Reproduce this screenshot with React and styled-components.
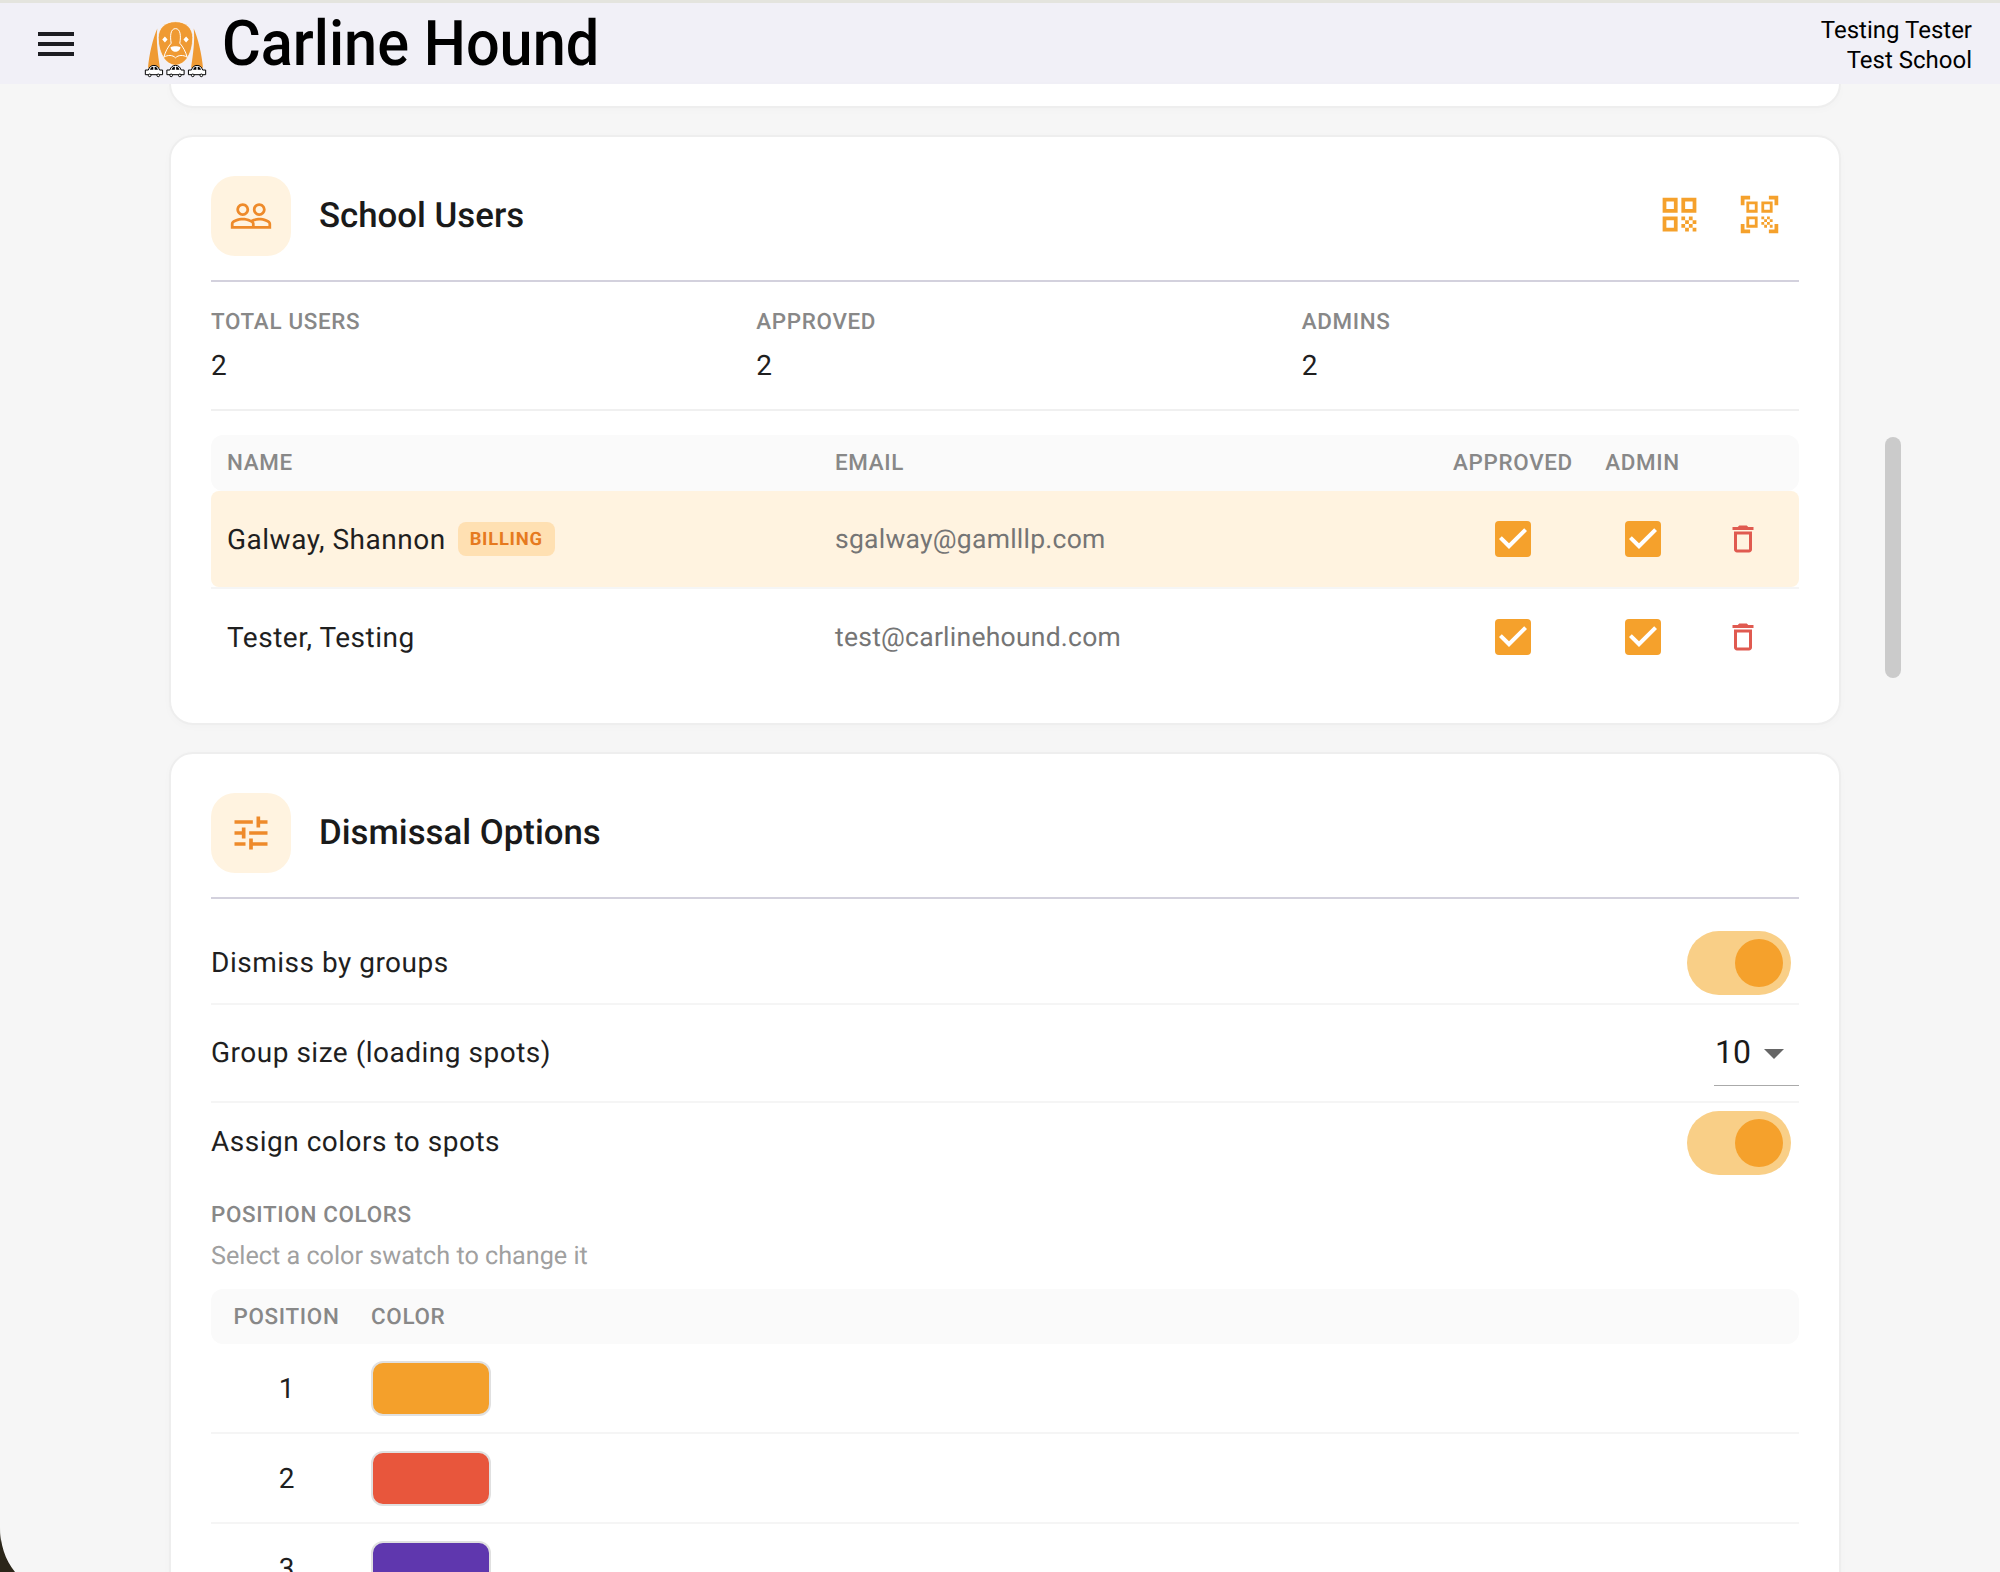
import React from 'react'
import styled, { createGlobalStyle } from 'styled-components'

const GlobalStyle = createGlobalStyle`
  html, body {
    margin: 0;
    padding: 0;
    background: #f6f6f6;
  }
  * {
    box-sizing: border-box;
  }
`
const Screen = styled.div`
  position: relative;
  width: 2000px;
  height: 1572px;
  overflow: hidden;
  background-color: #f6f6f6;
  font-family: Roboto, sans-serif;
  text-rendering: geometricPrecision;
  color: #1f1f1f;
  border-top: 3px solid #e4e4de;
`
const TopBar = styled.header`
  height: 81px;
  display: flex;
  align-items: center;
  background-color: #f1f0f7;
  color: #000;
  padding: 0 28px 0 32px;
`
const MenuButton = styled.div`
  width: 48px;
  height: 48px;
  color: #1d1d22;
  > svg { display: block; }
`
const Logo = styled.svg`
  width: 63px;
  height: 57px;
  margin: 12px 0 0 64px;
  flex-shrink: 0;
`
const Brand = styled.div`
  font-size: 63px;
  font-weight: 500;
  margin: 2px 0 0 15px;
  white-space: nowrap;
  transform: scaleX(0.943);
  transform-origin: left center;
  flex: 1;
`
const UserBox = styled.div`
  text-align: right;
  font-size: 24px;
  line-height: 30px;
  padding-top: 2px;
`
const Main = styled.main`
  display: flex;
  flex-direction: column;
  gap: 27px;
  padding-left: 169px;
  width: 1841px;
`
const Card = styled.section`
  background-color: #fff;
  border: 2px solid #eeeeee;
  border-radius: 24px;
  padding: 0 40px 36px;
  box-shadow: 0 2px 8px rgba(0, 0, 0, 0.02);
`
const StubCard = styled(Card)`
  height: 24px;
  padding: 0;
  border-top: none;
  border-radius: 0 0 24px 24px;
`
const CardHead = styled.div`
  display: flex;
  align-items: center;
  height: 145px;
  padding-top: 39px;
  padding-bottom: 24px;
  border-bottom: 2px solid #d3d1dd;
`
const IconBox = styled.div`
  width: 80px;
  height: 80px;
  border-radius: 24px;
  background-color: #fff3e0;
  color: #ee8a2a;
  display: flex;
  align-items: center;
  justify-content: center;
`
const CardTitle = styled.h2`
  margin: 0 0 0 28px;
  font-size: 34.8px;
  font-weight: 500;
  color: #1a1a1a;
  flex: 1;
`
const HeadActions = styled.div`
  display: flex;
  align-items: center;
  gap: 35px;
  padding-right: 17px;
  margin-bottom: 3px;
  color: #f5a12c;
  > svg { display: block; }
`
const Stats = styled.div`
  display: grid;
  grid-template-columns: repeat(3, 1fr);
  gap: 48px;
  padding: 26px 0 0;
  height: 129px;
  border-bottom: 2px solid #f0f0f0;
`
const Label = styled.div`
  font-size: 22.4px;
  line-height: 28px;
  font-weight: 500;
  letter-spacing: 0.03em;
  color: #888;
  text-transform: uppercase;
`
const StatValue = styled.div`
  font-size: 28px;
  line-height: 36px;
  margin-top: 12px;
  letter-spacing: 0.00938em;
`
const UserHead = styled.div`
  display: grid;
  grid-template-columns: 608px 618px 152px 107px 103px;
  align-items: center;
  height: 56px;
  margin-top: 24px;
  background-color: #fafafa;
  border-radius: 12px;
`
const HeadCell = styled(Label)`
  padding-left: ${(p) => (p.$center ? 0 : '16px')};
  text-align: ${(p) => (p.$center ? 'center' : 'left')};
`
const UserRow = styled.div`
  display: grid;
  grid-template-columns: 608px 618px 152px 107px 103px;
  align-items: center;
  height: 96px;
  background-color: ${(p) => (p.$billing ? '#fff3e0' : 'transparent')};
  border-radius: 8px;
  margin-bottom: 2px;
  position: relative;
`
const RowRule = styled.div`
  height: 2px;
  margin-top: -2px;
  background-color: #f5f5f5;
`
const NameCell = styled.div`
  display: flex;
  align-items: center;
  gap: 12px;
  padding-left: 16px;
  font-size: 28px;
  letter-spacing: 0.018em;
`
const Badge = styled.span`
  height: 34px;
  display: inline-flex;
  align-items: center;
  padding: 0 12px;
  border-radius: 8px;
  background-color: #ffe0b2;
  color: #e67a1e;
  font-size: 18.4px;
  font-weight: 700;
  letter-spacing: 0.04em;
`
const EmailCell = styled.div`
  padding-left: 16px;
  font-size: 26.5px;
  letter-spacing: 0.00938em;
  color: #757575;
`
const IconCell = styled.div`
  display: flex;
  justify-content: center;
  padding-right: ${(p) => p.$shift || 0};
  > svg { display: block; }
`
const OptionRow = styled.div`
  display: flex;
  align-items: center;
  justify-content: space-between;
  height: ${(p) => p.$height};
  margin-top: ${(p) => p.$top || 0};
  border-bottom: ${(p) => (p.$last ? 'none' : '2px solid #f5f5f5')};
  font-size: 28px;
  letter-spacing: 0.018em;
`
const OptionLabel = styled.span`
  margin-bottom: 2px;
`
const Toggle = styled.div`
  width: 104px;
  height: 64px;
  border-radius: 32px;
  background-color: #f9cf87;
  margin-right: 8px;
  display: flex;
  align-items: center;
  justify-content: flex-end;
  padding-right: 8px;
`
const Knob = styled.div`
  width: 48px;
  height: 48px;
  border-radius: 50%;
  background-color: #f5a12c;
`
const SelectBox = styled.div`
  width: 85px;
  height: 67px;
  align-self: flex-start;
  margin-top: 14px;
  border-bottom: 1px solid #aaa;
  display: flex;
  align-items: center;
  font-size: 32px;
  letter-spacing: 0;
  padding-left: 1px;
  color: #1a1a1a;
`
const Caret = styled.span`
  width: 0;
  height: 0;
  margin-left: 13px;
  margin-top: 4px;
  border-left: 10px solid transparent;
  border-right: 10px solid transparent;
  border-top: 10px solid #666;
`
const ColorsLabel = styled(Label)`
  margin-top: 19px;
`
const Hint = styled.div`
  font-size: 25.2px;
  line-height: 30px;
  margin-top: 13px;
  color: #a0a0a0;
`
const ColorHead = styled.div`
  display: grid;
  grid-template-columns: 151px 1fr;
  align-items: center;
  height: 55px;
  margin-top: 17px;
  background-color: #fafafa;
  border-radius: 12px;
`
const ColorHeadCell = styled(Label)`
  text-align: ${(p) => (p.$center ? 'center' : 'left')};
  padding-left: ${(p) => (p.$center ? 0 : '9px')};
`
const ColorRow = styled.div`
  display: grid;
  grid-template-columns: 151px 1fr;
  align-items: center;
  height: 90px;
  border-bottom: 2px solid #f5f5f5;
`
const Position = styled.div`
  text-align: center;
  font-size: 28px;
`
const Swatch = styled.div`
  width: 120px;
  height: 55px;
  margin-left: 9px;
  border: 2px solid #e0e0e0;
  border-radius: 12px;
  background-color: ${(p) => p.$color};
`
const Scrollbar = styled.div`
  position: absolute;
  left: 1885px;
  top: 434px;
  width: 16px;
  height: 241px;
  border-radius: 8px;
  background-color: #cbcbcb;
`
/* the dark desktop peeking through the window's rounded corner */
const WindowCorner = styled.div`
  position: absolute;
  left: 0;
  bottom: 0;
  width: 15px;
  height: 46px;
  background: linear-gradient(rgba(43, 38, 25, 0), #2b2619 35%);
  clip-path: path('M0 0 C0 18 5 34 15 46 H0 Z');
`

const Icon = ({ size = 24, d, fill = 'currentColor' }) => (
  <svg width={size} height={size} viewBox="0 0 24 24" fill={fill}>
    <path d={d} />
  </svg>
)

const CheckIcon = () => (
  <svg width="48" height="48" viewBox="0 0 24 24">
    <rect x="3" y="3" width="18" height="18" rx="2" fill="#f5a12c" />
    <path d="M10 17l-5-5 1.41-1.41L10 14.17l7.59-7.59L19 8z" fill="#fff" />
  </svg>
)

const MENU = 'M3 18h18v-2H3zm0-5h18v-2H3zm0-7v2h18V6z'
const PEOPLE = 'M16.5 13c-1.2 0-3.07.34-4.5 1-1.43-.67-3.3-1-4.5-1C5.33 13 1 14.08 1 16.25V19h22v-2.75c0-2.17-4.33-3.25-6.5-3.25zm-4 4.5h-10v-1.25c0-.54 2.56-1.75 5-1.75s5 1.21 5 1.75v1.25zm9 0H14v-1.25c0-.46-.2-.86-.52-1.22.88-.3 1.96-.53 3.02-.53 2.44 0 5 1.21 5 1.75v1.25zM7.5 12c1.93 0 3.5-1.57 3.5-3.5S9.43 5 7.5 5 4 6.57 4 8.5 5.57 12 7.5 12zm0-5.5c1.1 0 2 .9 2 2s-.9 2-2 2-2-.9-2-2 .9-2 2-2zm9 5.5c1.93 0 3.5-1.57 3.5-3.5S18.43 5 16.5 5 13 6.57 13 8.5s1.57 3.5 3.5 3.5zm0-5.5c1.1 0 2 .9 2 2s-.9 2-2 2-2-.9-2-2 .9-2 2-2z'
const TUNE = 'M3 17v2h6v-2H3zM3 5v2h10V5H3zm10 16v-2h8v-2h-8v-2h-2v6h2zM7 9v2H3v2h4v2h2V9H7zm14 4v-2H11v2h10zm-6-4h2V7h4V5h-4V3h-2v6z'
const QR = 'M3 11h8V3H3v8zm2-6h4v4H5V5zM3 21h8v-8H3v8zm2-6h4v4H5v-4zM13 3v8h8V3h-8zm6 6h-4V5h4v4zM19 19h2v2h-2zM13 13h2v2h-2zM15 15h2v2h-2zM13 17h2v2h-2zM15 19h2v2h-2zM17 17h2v2h-2zM17 13h2v2h-2zM19 15h2v2h-2z'
const QR_SCAN = 'M9.5 6.5v3h-3v-3h3M11 5H5v6h6V5zm-1.5 9.5v3h-3v-3h3M11 13H5v6h6v-6zm6.5-6.5v3h-3v-3h3M19 5h-6v6h6V5zm-6 8h1.5v1.5H13V13zm1.5 1.5H16V16h-1.5v-1.5zM16 13h1.5v1.5H16V13zm-3 3h1.5v1.5H13V16zm1.5 1.5H16V19h-1.5v-1.5zM16 16h1.5v1.5H16V16zm1.5-1.5H19V16h-1.5v-1.5zm0 3H19V19h-1.5v-1.5zM22 7h-2V4h-3V2h5v5zm0 15v-5h-2v3h-3v2h5zM2 22h5v-2H4v-3H2v5zM2 2v5h2V4h3V2H2z'
const TRASH = 'M6 19c0 1.1.9 2 2 2h8c1.1 0 2-.9 2-2V7H6v12zM8 9h8v10H8V9zm7.5-5l-1-1h-5l-1 1H5v2h14V4h-3.5z'

const users = [
  { name: 'Galway, Shannon', email: 'sgalway@gamlllp.com', billing: true },
  { name: 'Tester, Testing', email: 'test@carlinehound.com' },
]
const colors = ['#f4a02b', '#e8563c', '#5f37ae']

const Car = ({ x }) => (
  <g transform={`translate(${x} 0)`}>
    <path d="M-26 207v-14h9c3-9 8-14 17-14s14 5 17 14h9v14z" fill="#fff" stroke="#000" strokeWidth="3" />
    <path d="M-12 192c2-5 5-9 10-9v9zM2 183c5 0 8 4 10 9H2z" fill="#000" />
    <circle cx="-13" cy="209" r="4" fill="#fff" stroke="#000" strokeWidth="3" />
    <circle cx="13" cy="209" r="4" fill="#fff" stroke="#000" strokeWidth="3" />
  </g>
)

const HoundLogo = () => (
  <Logo viewBox="40 45 190 172">
    <path d="M80 68C66 100 56 145 52 186h36c-6-40-12-80-8-118zM190 68c14 32 24 77 28 118h-36c6-40 12-80 8-118z" fill="#ef9a33" />
    <path d="M135 47c-32 0-52 20-52 48 0 26 6 46 18 64 7 10 18 18 34 20 16-2 27-10 34-20 12-18 18-38 18-64 0-28-20-48-52-48z" fill="#ef9a33" stroke="#fff" strokeWidth="2" />
    <path d="M122 112C118 90 120 68 135 68s17 22 13 44c9 10 18 26 22 42-12-7-26-7-35 2-9-9-23-9-35-2 4-16 13-32 22-42z" fill="none" stroke="#fff" strokeWidth="3" />
    <path d="M103 92l8 9-8 9-8-9zM167 92l8 9-8 9-8-9zM120 124c8-4 22-4 30 0 0 7-8 14-15 14s-15-7-15-14z" fill="#fff" />
    <Car x={70} />
    <Car x={135} />
    <Car x={200} />
  </Logo>
)

function App() {
  return (
    <Screen>
      <GlobalStyle />
      <TopBar>
        <MenuButton><Icon size={48} d={MENU} /></MenuButton>
        <HoundLogo />
        <Brand>Carline Hound</Brand>
        <UserBox>
          <div>Testing Tester</div>
          <div>Test School</div>
        </UserBox>
      </TopBar>
      <Main>
        <StubCard />
        <Card>
          <CardHead>
            <IconBox><Icon size={44} d={PEOPLE} /></IconBox>
            <CardTitle>School Users</CardTitle>
            <HeadActions>
              <Icon size={45} d={QR} />
              <Icon size={45} d={QR_SCAN} />
            </HeadActions>
          </CardHead>
          <Stats>
            <div><Label>Total Users</Label><StatValue>2</StatValue></div>
            <div><Label>Approved</Label><StatValue>2</StatValue></div>
            <div><Label>Admins</Label><StatValue>2</StatValue></div>
          </Stats>
          <UserHead>
            <HeadCell>Name</HeadCell>
            <HeadCell>Email</HeadCell>
            <HeadCell $center>Approved</HeadCell>
            <HeadCell $center>Admin</HeadCell>
            <div />
          </UserHead>
          {users.map((u) => (
            <React.Fragment key={u.email}>
              <UserRow $billing={u.billing}>
                <NameCell>
                  {u.name}
                  {u.billing && <Badge>BILLING</Badge>}
                </NameCell>
                <EmailCell>{u.email}</EmailCell>
                <IconCell><CheckIcon /></IconCell>
                <IconCell><CheckIcon /></IconCell>
                <IconCell $shift="10px">
                  <Icon size={36} d={TRASH} fill="#e05a50" />
                </IconCell>
              </UserRow>
              {u.billing && <RowRule />}
            </React.Fragment>
          ))}
        </Card>
        <Card>
          <CardHead>
            <IconBox><Icon size={44} d={TUNE} /></IconBox>
            <CardTitle>Dismissal Options</CardTitle>
          </CardHead>
          <OptionRow $top="24px" $height="82px">
            <OptionLabel>Dismiss by groups</OptionLabel>
            <Toggle><Knob /></Toggle>
          </OptionRow>
          <OptionRow $height="98px">
            <OptionLabel>Group size (loading spots)</OptionLabel>
            <SelectBox>10<Caret /></SelectBox>
          </OptionRow>
          <OptionRow $last $height="79px">
            <OptionLabel>Assign colors to spots</OptionLabel>
            <Toggle><Knob /></Toggle>
          </OptionRow>
          <ColorsLabel>Position Colors</ColorsLabel>
          <Hint>Select a color swatch to change it</Hint>
          <ColorHead>
            <ColorHeadCell $center>Position</ColorHeadCell>
            <ColorHeadCell>Color</ColorHeadCell>
          </ColorHead>
          {colors.map((c, i) => (
            <ColorRow key={c}>
              <Position>{i + 1}</Position>
              <Swatch $color={c} />
            </ColorRow>
          ))}
        </Card>
      </Main>
      <Scrollbar />
      <WindowCorner />
    </Screen>
  )
}

export default App
